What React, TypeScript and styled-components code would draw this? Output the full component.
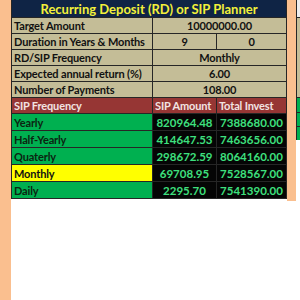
import React from "react";
import styled, { createGlobalStyle } from "styled-components";

const GlobalStyle = createGlobalStyle`
  html, body { margin: 0; padding: 0; background: #ffffff; }
  body { font-family: Lato, "Open Sans", sans-serif; }
`

const frequencies = [
  { name: "Yearly", sip: "820964.48", total: "7388680.00" },
  { name: "Half-Yearly", sip: "414647.53", total: "7463656.00" },
  { name: "Quaterly", sip: "298672.59", total: "8064160.00" },
  { name: "Monthly", sip: "69708.95", total: "7528567.00", current: true },
  { name: "Daily", sip: "2295.70", total: "7541390.00" },
]

const inputs = [
  { label: "Target Amount", value: "10000000.00" },
  { label: "RD/SIP Frequency", value: "Monthly" },
  { label: "Expected annual return (%)", value: "6.00" },
  { label: "Number of Payments", value: "108.00" },
]

const App = () => {
  return (
    <Page>
      <GlobalStyle />
      <LeftStrip />
      <Sheet>
        <Title>Recurring Deposit (RD) or SIP Planner</Title>

        <Label>{inputs[0].label}</Label>
        <Value $span={2}>{inputs[0].value}</Value>

        <Label>Duration in Years &amp; Months</Label>
        <Value>9</Value>
        <Value>0</Value>

        {inputs.slice(1).map(r => (
          <React.Fragment key={r.label}>
            <Label>{r.label}</Label>
            <Value $span={2}>{r.value}</Value>
          </React.Fragment>
        ))}

        <Head>SIP Frequency</Head>
        <Head>SIP Amount</Head>
        <Head>Total Invest</Head>

        {frequencies.map(f => (
          <React.Fragment key={f.name}>
            <FreqName $current={f.current}>{f.name}</FreqName>
            <Amount>{f.sip}</Amount>
            <Amount>{f.total}</Amount>
          </React.Fragment>
        ))}
      </Sheet>
      <RightStrip />
      <NextSheet>
        <EdgeCell $bg="#eeeeee" $h={17} />
        <EdgeCell $bg="#c4bd97" $h={79} />
        <EdgeCell $bg="#00b050" $h={14} />
        <EdgeCell $bg="#00b050" $h={13} />
        <EdgeCell $bg="#00b050" $h={13} />
      </NextSheet>
    </Page>
  )
}

const Page = styled.div`
  display: flex;
  align-items: flex-start;
  width: 300px;
  height: 300px;
  overflow: hidden;
`

const LeftStrip = styled.div`
  width: 11px;
  height: 300px;
  flex: none;
  background: #fabf8f;
`

const RightStrip = styled.div`
  width: 9px;
  height: 201px;
  flex: none;
  background: #fabf8f;
`

const Sheet = styled.div`
  display: grid;
  grid-template-columns: 140px 63px 69px;
  grid-template-rows: 17px repeat(5, 15px) 15px repeat(5, 16px);
  gap: 1px;
  background: #262626;
  border: 1px solid #262626;
  border-top: none;
  flex: none;
  font-weight: 700;
  font-size: 11px;
  letter-spacing: -0.15px;
  color: #111;
`

const Title = styled.div`
  grid-column: 1 / span 3;
  background: #0f2445;
  color: #f2f03a;
  font-size: 13px;
  display: flex;
  align-items: center;
  justify-content: center;
  letter-spacing: 0;
`

const Cell = styled.div`
  display: flex;
  align-items: center;
  padding: 0 2px;
  white-space: nowrap;
  overflow: hidden;
`

const Label = styled(Cell)`
  background: #c4bd97;
`

const Value = styled(Cell)<{ $span?: number }>`
  background: #c4bd97;
  justify-content: center;
  grid-column: span ${p => p.$span ?? 1};
`

const Head = styled(Cell)`
  background: #963634;
  color: #f2e4e2;
`

const FreqName = styled(Cell)<{ $current?: boolean }>`
  background: ${p => (p.$current ? "#ffff00" : "#00b050")};
  color: ${p => (p.$current ? "#111" : "#0b2410")};
`

const Amount = styled(Cell)`
  background: #050505;
  color: #3ee07e;
  justify-content: center;
  font-size: 11.5px;
  letter-spacing: 0;
`

const NextSheet = styled.div`
  display: flex;
  flex-direction: column;
  gap: 1px;
  background: #262626;
  border-left: 1px solid #262626;
  width: 5px;
  flex: none;
`

const EdgeCell = styled.div<{ $bg: string; $h: number }>`
  height: ${p => p.$h}px;
  background: ${p => p.$bg};
`

export default App
